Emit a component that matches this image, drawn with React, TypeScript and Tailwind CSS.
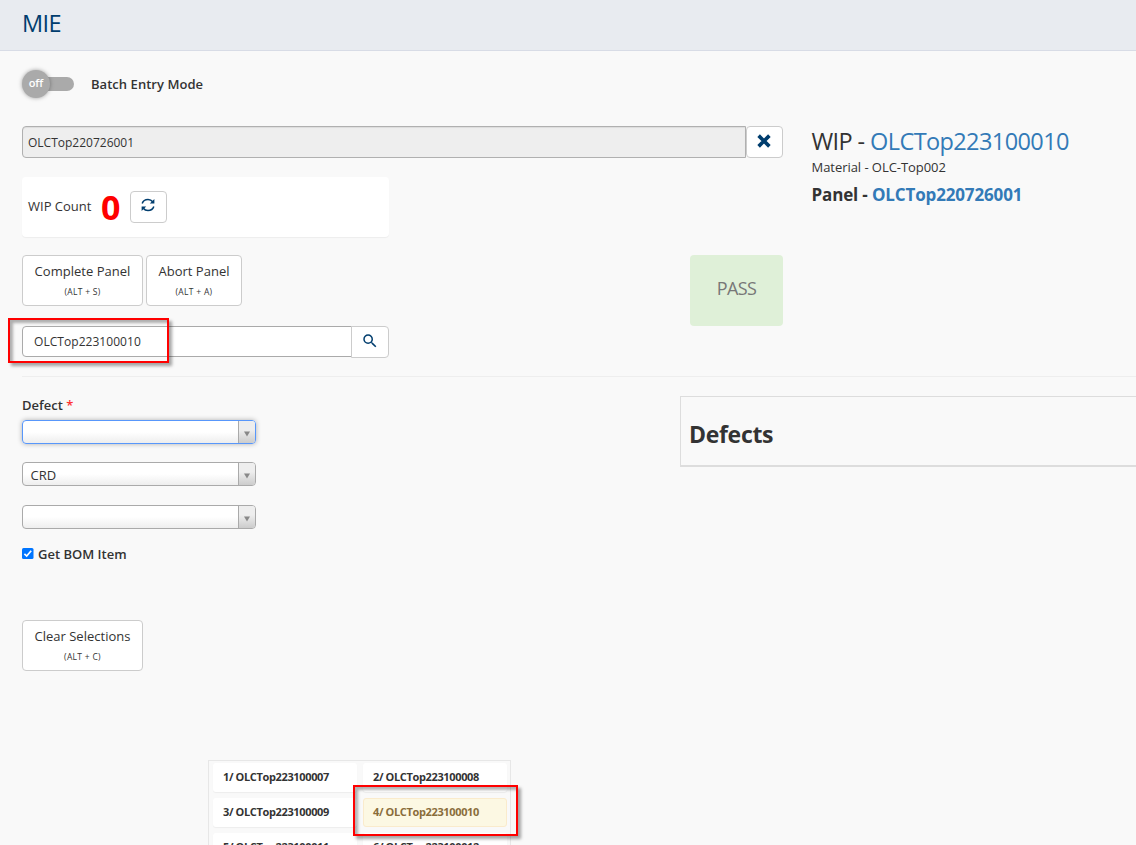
import React from 'react';
import { MdSearch } from 'react-icons/md';

function ActionButton({ label, hint, className }: { label: string; hint: string; className: string }) {
  return (
    <button className={`flex h-[51px] flex-col items-center rounded-[4px] border border-[#ccc] bg-white pt-[5px] ${className}`}>
      <span className="text-[13px] leading-5 tracking-[0.02px] whitespace-nowrap">{label}</span>
      <span className="mt-[6px] text-[8.5px] leading-[10px] tracking-[0.3px] whitespace-nowrap">{hint}</span>
    </button>
  );
}

function Select({ value = '', focused = false }: { value?: string; focused?: boolean }) {
  return (
    <div
      className={`flex h-6 w-[234px] overflow-hidden rounded-[4px] border bg-linear-to-b from-white from-50% to-[#eee] ${
        focused ? 'border-[#5897fb] shadow-[0_0_5px_rgba(0,0,0,0.3)]' : 'border-[#aaa]'
      }`}
    >
      <span className="flex-1 pl-[7.5px] text-[13px] leading-[24px]">{value}</span>
      <span className="flex w-[17px] justify-center border-l border-[#aaa] bg-linear-to-b from-[#eee] from-40% to-[#ccc]">
        <svg className="mt-[10px] mr-px h-[6px] w-[6px]" viewBox="0 0 6 6">
          <path d="M0 0.5H6L3 5.5Z" fill="#888" />
        </svg>
      </span>
    </div>
  );
}

function RefreshIcon() {
  return (
    <svg className="mr-px h-[14px] w-[14px] text-[#003d6e]" viewBox="0 0 14 14" fill="none">
      <path d="M1.2 5.4C2 2.9 4.2 1.4 7 1.4C9 1.4 10.6 2.2 11.7 3.7" stroke="currentColor" strokeWidth="1.5" />
      <path d="M13.4 1V5.6H8.8Z" fill="currentColor" />
      <path d="M12.8 8.6C12 11.1 9.8 12.6 7 12.6C5 12.6 3.4 11.8 2.3 10.3" stroke="currentColor" strokeWidth="1.5" />
      <path d="M0.6 13V8.4H5.2Z" fill="currentColor" />
    </svg>
  );
}

function UnitCell({ label, selected = false }: { label: string; selected?: boolean }) {
  return (
    <div
      className={`h-[29px] w-[144px] rounded-[3px] border pl-[9px] text-[11px] leading-[25px] font-bold tracking-[-0.36px] whitespace-nowrap ${
        selected
          ? 'border-[#faebcc] bg-[#fcf8e3] text-[#8a6d3b]'
          : 'border-transparent bg-white shadow-[0_1px_1px_rgba(0,0,0,0.05)]'
      }`}
    >
      {label}
    </div>
  );
}

const units = [
  '1/ OLCTop223100007',
  '2/ OLCTop223100008',
  '3/ OLCTop223100009',
  '4/ OLCTop223100010',
  '5/ OLCTop223100011',
  '6/ OLCTop223100012',
];

export default function App() {
  return (
    <div className="relative h-[845px] w-[1136px] overflow-hidden bg-[#f9f9f9] font-['Open_Sans',sans-serif] text-[13px] text-[#333]">
      <header className="h-[51px] border-b border-[#d8dce6] bg-[#e8ebf0] pl-[22px]">
        <h1 className="text-[23.5px] leading-[46px] tracking-[-0.6px] text-[#003d6e]">MIE</h1>
      </header>

      <div className="flex h-[325px] pl-[22px]">
        <div className="w-[761px]">
          <div className="flex h-[75px] items-center">
            <div className="-mt-[9px] flex h-7 w-[52px] items-center">
              <div className="z-10 h-7 w-7 shrink-0 rounded-full bg-[#aaa] text-center text-[11px] leading-[26px] font-semibold text-white shadow-[0_0_4px_rgba(0,0,0,0.35)]">
                off
              </div>
              <div className="-ml-2 h-[14px] w-8 rounded-r-[7px] bg-[#aaa]" />
            </div>
            <span className="-mt-[8px] ml-[17px] font-semibold tracking-[0.04px]">Batch Entry Mode</span>
          </div>

          <div className="flex h-8">
            <div className="w-[724px] rounded-l-[4px] border border-[#b0b0b0] bg-[#eee] pl-[5px] text-[12px] leading-[31px] shadow-[inset_0_1px_1px_rgba(0,0,0,0.075)]">
              OLCTop220726001
            </div>
            <button className="flex w-[37px] items-center justify-center rounded-[4px] border border-[#ccc] bg-white pb-[2px]">
              <svg className="mr-px h-[14px] w-[14px]" viewBox="0 0 13 13">
                <path d="M1.5 1.5L11.5 11.5M11.5 1.5L1.5 11.5" stroke="#003d6e" strokeWidth="3.4" />
              </svg>
            </button>
          </div>

          <div className="mt-[19px] flex h-[60px] w-[367px] items-center rounded-[4px] bg-white pb-px pl-[6px] shadow-[0_1px_1px_rgba(0,0,0,0.05)]">
            <span className="w-[73px]">WIP Count</span>
            <span className="w-[29px] text-[34px] leading-none font-bold text-[#f00]">0</span>
            <button className="flex h-8 w-[37px] items-center justify-center rounded-[4px] border border-[#ccc] bg-white pb-[3px]">
              <RefreshIcon />
            </button>
          </div>

          <div className="mt-[18px] flex justify-between">
            <div className="flex gap-[3px]">
              <ActionButton label="Complete Panel" hint="(ALT + S)" className="w-[121px]" />
              <ActionButton label="Abort Panel" hint="(ALT + A)" className="w-[96px]" />
            </div>
            <div className="h-[71px] w-[93px] rounded-[4px] bg-[#dff0d8] text-center text-[18px] leading-[67px] tracking-[-0.6px] text-[#777]">
              PASS
            </div>
          </div>

          <div className="flex h-8">
            <div className="h-[31px] w-[330px] rounded-l-[4px] border border-[#aaa] bg-white pl-[11px] text-[12px] leading-[30px] tracking-[0.05px]">
              OLCTop223100010
            </div>
            <button className="-ml-px flex w-[38px] items-center justify-center rounded-r-[4px] border border-[#ccc] bg-white pb-[3px]">
              <MdSearch className="h-[18px] w-[18px] text-[#003d6e]" />
            </button>
          </div>
        </div>

        <div className="ml-[28.5px] pt-[75px]">
          <h2 className="text-[23.5px] leading-[31px] tracking-[-0.6px] whitespace-nowrap">
            WIP - <span className="text-[#337ab7]">OLCTop223100010</span>
          </h2>
          <p className="text-[13px] leading-5 tracking-[-0.05px]">Material - OLC-Top002</p>
          <p className="mt-[6px] text-[17px] leading-6 font-bold tracking-[-0.15px]">
            Panel - <span className="text-[#337ab7]">OLCTop220726001</span>
          </p>
        </div>
      </div>

      <hr className="ml-[22px] border-[#eee]" />

      <div className="flex pl-[22px]">
        <div className="flex w-[658px] flex-col items-start pt-[18px]">
          <label className="mb-[5px] h-5 leading-5 font-semibold">
            Defect <span className="text-[#f33]">*</span>
          </label>
          <Select focused />
          <div className="mt-[18px]">
            <Select value="CRD" />
          </div>
          <div className="mt-[19px]">
            <Select />
          </div>
          <label className="mt-[16px] flex h-5 items-center font-semibold">
            <svg className="mt-[-4px] mr-[4px] h-[11px] w-[12px]" viewBox="0 0 12 11">
              <rect width="11.5" height="11" rx="1.5" fill="#0075ff" />
              <path d="M2.4 5.8L4.7 8L9.2 2.8" fill="none" stroke="#fff" strokeWidth="1.7" />
            </svg>
            Get BOM Item
          </label>
          <div className="mt-[55px]">
            <ActionButton label="Clear Selections" hint="(ALT + C)" className="w-[121px]" />
          </div>
        </div>
        <section className="mt-[19px] h-[71px] flex-1 border-t border-b-2 border-l border-[#ddd] pl-2">
          <h2 className="text-[23px] leading-[74px] font-bold tracking-[-0.3px]">Defects</h2>
        </section>
      </div>

      <div className="mt-[89px] ml-[208px] w-[303px] border border-[#e7e7e7] pt-[2px] pl-1">
        <div className="grid grid-cols-[150px_144px] gap-y-[6px]">
          {units.map((unit, i) => (
            <UnitCell key={unit} label={unit} selected={i === 3} />
          ))}
        </div>
      </div>

      <div className="absolute top-[318px] left-[8px] h-[45px] w-[161px] border-2 border-[#f00] shadow-[3px_3px_3px_rgba(0,0,0,0.35),inset_3px_3px_3px_rgba(0,0,0,0.3)]" />
      <div className="absolute top-[785px] left-[353px] h-[51px] w-[165px] border-2 border-[#f00] shadow-[3px_3px_3px_rgba(0,0,0,0.35),inset_3px_3px_3px_rgba(0,0,0,0.3)]" />
    </div>
  );
}
